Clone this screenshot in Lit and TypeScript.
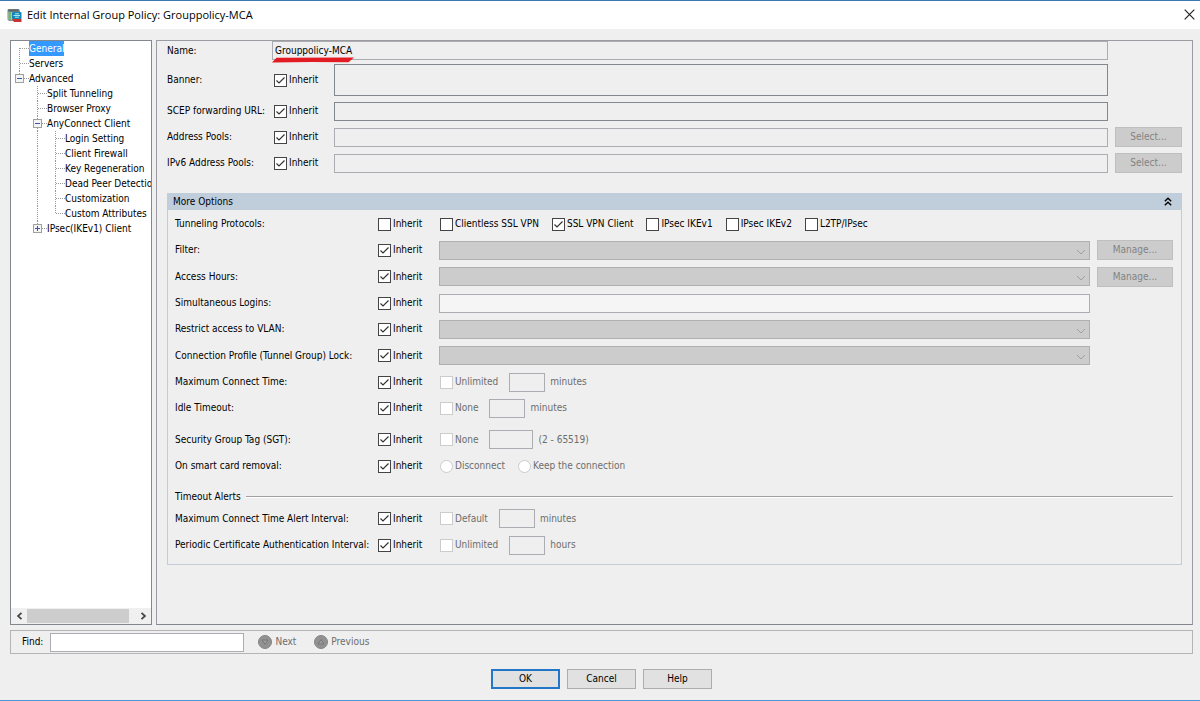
import { LitElement, html, svg, css, nothing, TemplateResult } from "lit";
import { customElement } from "lit/decorators.js";

type Guide = "blank" | "line" | "first" | "tee" | "elbow" | "minus" | "minusLast" | "plus";

interface TreeItem {
  text: string;
  guides: Guide[];
  selected?: boolean;
}

const TREE: TreeItem[] = [
  { text: "General", guides: ["first"], selected: true },
  { text: "Servers", guides: ["tee"] },
  { text: "Advanced", guides: ["minusLast"] },
  { text: "Split Tunneling", guides: ["blank", "tee"] },
  { text: "Browser Proxy", guides: ["blank", "tee"] },
  { text: "AnyConnect Client", guides: ["blank", "minus"] },
  { text: "Login Setting", guides: ["blank", "line", "tee"] },
  { text: "Client Firewall", guides: ["blank", "line", "tee"] },
  { text: "Key Regeneration", guides: ["blank", "line", "tee"] },
  { text: "Dead Peer Detection", guides: ["blank", "line", "tee"] },
  { text: "Customization", guides: ["blank", "line", "tee"] },
  { text: "Custom Attributes", guides: ["blank", "line", "elbow"] },
  { text: "IPsec(IKEv1) Client", guides: ["blank", "plus"] },
];

const controlStyles = css`
  * {
    box-sizing: border-box;
  }
  input,
  select,
  button,
  textarea {
    font: inherit;
    color: inherit;
    margin: 0;
    border-radius: 0;
    outline: none;
  }
  .tick {
    display: inline-flex;
    align-items: center;
    gap: 2px;
    white-space: nowrap;
  }
  .tick input {
    appearance: none;
    flex: none;
    width: 13px;
    height: 13px;
    border: 1px solid #444;
    background: #fff center / 11px 11px no-repeat;
  }
  .tick input[type="radio"] {
    border-radius: 50%;
  }
  .tick input:checked {
    background-image: url("data:image/svg+xml,%3Csvg xmlns='http://www.w3.org/2000/svg' viewBox='0 0 11 11'%3E%3Cpath d='M1.5 5.5L4 8L9.5 2.5' fill='none' stroke='%23333' stroke-width='1.2'/%3E%3C/svg%3E");
  }
  .tick input:disabled {
    border-color: #ccc;
  }
  .tick.off {
    color: #6d6d6d;
  }
  .text {
    width: 100%;
    height: 19px;
    padding: 0 2px;
    border: 1px solid #abadb3;
    background: #efefef;
  }
  .push {
    height: 20px;
    padding: 0;
    border: 1px solid #adadad;
    background: #e1e1e1;
  }
  .push:disabled {
    border-color: #bfbfbf;
    background: #ccc;
    color: #838383;
  }
`;

const tick = (label: string, checked = false, disabled = false, kind = "checkbox", name = "") => html`
  <label class="tick ${disabled ? "off" : ""}">
    <input type=${kind} name=${name || nothing} ?checked=${checked} ?disabled=${disabled} />${label}
  </label>
`;

@customElement("nav-tree")
class NavTree extends LitElement {
  static styles = [
    controlStyles,
    css`
      :host {
        display: flex;
        flex-direction: column;
        box-sizing: border-box;
        min-width: 0;
        border: 1px solid #828790;
        background: #fff;
        overflow: hidden;
      }
      .list {
        flex: 1;
        margin: 0;
        padding: 0;
        list-style: none;
        overflow: hidden;
      }
      .item {
        display: flex;
        height: 15px;
        line-height: 15px;
        white-space: nowrap;
      }
      .guide {
        flex: none;
        width: 18px;
        height: 15px;
      }
      .selected {
        background: #3399ff;
        color: #fff;
      }
      .scroll {
        display: flex;
        height: 16px;
        padding: 1px 0;
        background: #f0f0f0;
      }
      .arrow {
        flex: none;
        display: grid;
        place-items: center;
        width: 16px;
        padding: 0;
        border: 0;
        background: none;
      }
      .track {
        flex: 1;
        display: flex;
      }
      .thumb {
        width: 94%;
        background: #cdcdcd;
      }
    `,
  ];

  guide(kind: Guide) {
    const dash = "1 1";
    const down = (y1: number, y2: number) =>
      svg`<path d="M8.500 ${y1}V${y2}" stroke="#999" stroke-dasharray=${dash} />`;
    const across = (x: number) => svg`<path d="M${x} 7.500H18" stroke="#999" stroke-dasharray=${dash} />`;
    const box = (plus: boolean) => svg`
      <rect x="4.500" y="3.500" width="8" height="8" fill="#f4f4f4" stroke="#a0a0a0" />
      <path d="M6 7.500H11" stroke="#3a55a5" />
      ${plus ? svg`<path d="M8.500 5V10" stroke="#3a55a5" />` : nothing}`;
    const parts: Record<Guide, unknown> = {
      blank: nothing,
      line: down(0, 15),
      first: [down(7, 15), across(9)],
      tee: [down(0, 15), across(9)],
      elbow: [down(0, 8), across(9)],
      minus: [down(0, 15), across(13), box(false)],
      minusLast: [down(0, 4), across(13), box(false)],
      plus: [down(0, 4), across(13), box(true)],
    };
    return html`<svg class="guide" viewBox="0 0 18 15" fill="none" aria-hidden="true">${parts[kind]}</svg>`;
  }

  render() {
    return html`
      <ul class="list" role="tree">
        ${TREE.map(
          (item) => html`
            <li class="item" role="treeitem" aria-selected=${item.selected ? "true" : "false"}>
              ${item.guides.map((g) => this.guide(g))}<span class=${item.selected ? "selected" : ""}>${item.text}</span>
            </li>
          `,
        )}
      </ul>
      <div class="scroll">
        <button class="arrow" aria-label="Scroll left">
          <svg width="7" height="8" viewBox="0 0 7 8" fill="none"><path d="M5.500 .8L2 4L5.500 7.200" stroke="#444" stroke-width="1.700" /></svg>
        </button>
        <div class="track"><div class="thumb"></div></div>
        <button class="arrow" aria-label="Scroll right">
          <svg width="7" height="8" viewBox="0 0 7 8" fill="none"><path d="M1.500 .8L5 4L1.500 7.200" stroke="#444" stroke-width="1.700" /></svg>
        </button>
      </div>
    `;
  }
}

@customElement("policy-form")
class PolicyForm extends LitElement {
  static styles = [
    controlStyles,
    css`
      :host {
        display: block;
        box-sizing: border-box;
        min-width: 0;
        padding: 0 10px;
        border: 1px solid #9a9ca2;
        border-bottom-color: #828790;
      }
      .top {
        display: grid;
        grid-template-columns: 100px 53px minmax(0, 1fr) 67px;
        column-gap: 7px;
        row-gap: 4px;
        align-items: center;
      }
      .named {
        grid-column: 2 / 4;
        position: relative;
        margin-left: -2px;
        display: flex;
      }
      .mark {
        position: absolute;
        left: 0;
        top: 16px;
      }
      .field {
        grid-column: 3;
        display: flex;
        align-items: center;
        min-height: 22px;
      }
      .firm {
        border-color: #828790;
      }
      .banner {
        display: block;
        width: 100%;
        height: 32px;
        resize: none;
      }
      .name {
        white-space: nowrap;
      }
      .more {
        margin-top: 19px;
        border: 1px solid #c3cdd8;
        border-top: 0;
      }
      .head {
        display: flex;
        align-items: center;
        justify-content: space-between;
        height: 17px;
        padding: 0 9px 0 5px;
        background: #c0cddb;
      }
      .title {
        margin: 0;
        font: inherit;
      }
      .fold {
        display: flex;
        padding: 0;
        border: 0;
        background: none;
      }
      .rows {
        padding: 1px 8px 6px 7px;
      }
      .row {
        display: grid;
        grid-template-columns: 196px 54px minmax(0, 1fr) 76px;
        column-gap: 7px;
        align-items: center;
        height: 26px;
      }
      .row:nth-child(3n) {
        height: 27px;
      }
      .spaced {
        margin-top: 5px;
      }
      .group {
        display: flex;
        align-items: center;
      }
      .choices {
        grid-column: 3 / 5;
        padding-left: 1px;
        gap: 13px;
      }
      .limit {
        padding-left: 1px;
        gap: 11px;
        color: #6d6d6d;
      }
      .unit {
        display: flex;
        align-items: center;
        gap: 5px;
        white-space: nowrap;
      }
      .small {
        width: 36px;
      }
      .tag {
        width: 44px;
      }
      .light {
        background: #f5f5f5;
      }
      .drop {
        display: grid;
        align-items: center;
      }
      .drop > * {
        grid-area: 1 / 1;
      }
      .pick {
        appearance: none;
        width: 100%;
        height: 19px;
        padding: 0 2px;
        border: 1px solid #b0b0b0;
        background: #ccc;
        opacity: 1;
      }
      .caret {
        justify-self: end;
        margin-right: 4px;
        margin-top: 3px;
        pointer-events: none;
      }
      .divider {
        display: flex;
        align-items: center;
        gap: 5px;
        height: 17px;
        margin-top: 9px;
      }
      .rule {
        flex: 1;
        height: 2px;
        margin: 0;
        border: 0;
        border-top: 1px solid #a0a0a0;
        background: #fff;
      }
    `,
  ];

  top(label: string, field: TemplateResult, button = false) {
    return html`
      <span class="name">${label}:</span>
      ${tick("Inherit", true)}
      <div class="field">${field}</div>
      ${button ? html`<button class="push" disabled>Select...</button>` : html`<span></span>`}
    `;
  }

  row(label: string, content: TemplateResult, options: { checked?: boolean; spaced?: boolean; manage?: boolean } = {}) {
    const { checked = true, spaced = false, manage = false } = options;
    return html`
      <div class="row ${spaced ? "spaced" : ""}">
        <span class="name">${label}:</span>
        ${tick("Inherit", checked)} ${content}
        ${manage ? html`<button class="push" disabled>Manage...</button>` : nothing}
      </div>
    `;
  }

  drop(label: string) {
    return html`
      <div class="drop">
        <select class="pick" disabled aria-label=${label}></select>
        <svg class="caret" width="10" height="6" viewBox="0 0 10 6" fill="none">
          <path d="M1 1L5 5L9 1" stroke="#a0a0a0" />
        </svg>
      </div>
    `;
  }

  limit(label: string, option: string, unit: string, wide = false) {
    return html`
      <div class="group limit">
        ${tick(option, false, true)}
        <span class="unit"><input class="text ${wide ? "tag" : "small"}" disabled aria-label=${label} />${unit}</span>
      </div>
    `;
  }

  render() {
    return html`
      <div class="top">
        <label class="name" for="policy">Name:</label>
        <div class="named">
          <input class="text" id="policy" value="Grouppolicy-MCA" readonly />
          <svg class="mark" width="82" height="6" viewBox="0 0 82 6" aria-hidden="true">
            <path d="M0 5.600L4.500 .8L82 .4L76.500 5.200L40 5Z" fill="#e31b23" />
          </svg>
        </div>
        <span></span>
        ${this.top("Banner", html`<textarea class="text firm banner" disabled aria-label="Banner"></textarea>`)}
        ${this.top("SCEP forwarding URL", html`<input class="text firm" disabled aria-label="SCEP forwarding URL" />`)}
        ${this.top("Address Pools", html`<input class="text" disabled aria-label="Address Pools" />`, true)}
        ${this.top("IPv6 Address Pools", html`<input class="text" disabled aria-label="IPv6 Address Pools" />`, true)}
      </div>
      <section class="more">
        <header class="head">
          <h2 class="title">More Options</h2>
          <button class="fold" aria-label="Collapse">
            <svg width="8" height="9" viewBox="0 0 8 9" fill="none">
              <path d="M.8 4.300L4 1.200L7.200 4.300M.8 8.300L4 5.200L7.200 8.300" stroke="#000" stroke-width="1.400" />
            </svg>
          </button>
        </header>
        <div class="rows">
          ${this.row(
            "Tunneling Protocols",
            html`<div class="group choices">
              ${tick("Clientless SSL VPN")} ${tick("SSL VPN Client", true)} ${tick("IPsec IKEv1")}
              ${tick("IPsec IKEv2")} ${tick("L2TP/IPsec")}
            </div>`,
            { checked: false },
          )}
          ${this.row("Filter", this.drop("Filter"), { manage: true })}
          ${this.row("Access Hours", this.drop("Access Hours"), { manage: true })}
          ${this.row(
            "Simultaneous Logins",
            html`<input class="text light" disabled aria-label="Simultaneous Logins" />`,
          )}
          ${this.row("Restrict access to VLAN", this.drop("Restrict access to VLAN"))}
          ${this.row("Connection Profile (Tunnel Group) Lock", this.drop("Connection Profile Lock"))}
          ${this.row("Maximum Connect Time", this.limit("Maximum Connect Time", "Unlimited", "minutes"))}
          ${this.row("Idle Timeout", this.limit("Idle Timeout", "None", "minutes"))}
          ${this.row("Security Group Tag (SGT)", this.limit("Security Group Tag", "None", "(2 - 65519)", true), {
            spaced: true,
          })}
          ${this.row(
            "On smart card removal",
            html`<div class="group choices">
              ${tick("Disconnect", false, true, "radio", "card")}
              ${tick("Keep the connection", false, true, "radio", "card")}
            </div>`,
          )}
          <div class="divider">Timeout Alerts<hr class="rule" /></div>
          ${this.row("Maximum Connect Time Alert Interval", this.limit("Connect Time Alert", "Default", "minutes"))}
          ${this.row("Periodic Certificate Authentication Interval", this.limit("Certificate Interval", "Unlimited", "hours"))}
        </div>
      </section>
    `;
  }
}

@customElement("app-root")
class AppRoot extends LitElement {
  static styles = [
    controlStyles,
    css`
      :host {
        display: flex;
        flex-direction: column;
        box-sizing: border-box;
        min-height: 100vh;
        border-top: 1px solid #3a78b0;
        border-bottom: 1px solid #4a9ad8;
        background: #efefef;
        color: #000;
        font: 10px/14px "DejaVu Sans Condensed", "DejaVu Sans", sans-serif;
      }
      .titlebar {
        display: flex;
        align-items: center;
        gap: 5px;
        height: 28px;
        padding: 0 5px 0 7px;
        background: #fff;
      }
      .caption {
        flex: 1;
        margin: 0;
        font: 11px/16px "Open Sans", "Noto Sans", sans-serif;
      }
      .close {
        display: flex;
        padding: 0 0 2px;
        border: 0;
        background: none;
      }
      .body {
        flex: 1;
        display: grid;
        grid-template-columns: 142px minmax(0, 1fr);
        gap: 4px;
        padding: 11px 7px 5px 10px;
      }
      .find {
        display: flex;
        align-items: center;
        height: 24px;
        margin: 0 7px 0 10px;
        padding: 0 11px;
        gap: 14px;
        border: 1px solid #b4b4b4;
      }
      .search {
        display: flex;
        align-items: center;
        gap: 7px;
      }
      .query {
        width: 194px;
        background: #fff;
      }
      .steps {
        display: flex;
        gap: 18px;
      }
      .step {
        display: flex;
        align-items: center;
        gap: 3px;
        padding: 0;
        border: 0;
        background: none;
        color: #6d6d6d;
      }
      .actions {
        display: flex;
        justify-content: center;
        gap: 7px;
        padding: 15px 0 11px 3px;
      }
      .action {
        width: 69px;
      }
      .primary {
        border: 2px solid #2277c9;
      }
    `,
  ];

  step(label: string, triangle: string) {
    return html`
      <button class="step" disabled>
        <svg width="14" height="14" viewBox="0 0 14 14" fill="none">
          <circle cx="7" cy="7" r="6.500" fill="#929292" stroke="#858585" />
          <path d=${triangle} stroke="#777" fill="#9c9c9c" />
        </svg>
        ${label}
      </button>
    `;
  }

  render() {
    return html`
      <header class="titlebar">
        <svg width="15" height="15" viewBox="0 0 15 15" aria-hidden="true">
          <path d="M1 1H12L13 3V12L11 13H2L.5 11.500V2Z" fill="#7d9090" />
          <path d="M1.500 1.500H11.500V3.500H1.500Z" fill="#566668" />
          <path d="M1.500 4H5.500V12H1.500Z" fill="#9fd39a" />
          <path d="M2 5H4M2 7H4M2 9H4M2 11H4" stroke="#4d9a52" />
          <rect x="5" y="4" width="9.500" height="7" rx="1" fill="#1487b8" />
          <path d="M6.500 7.500H13M8 5.800H12M8 9.200H12" stroke="#a5e8f5" />
          <path d="M5 11H14.500V14H7Z" fill="#c93432" />
        </svg>
        <h1 class="caption">Edit Internal Group Policy: Grouppolicy-MCA</h1>
        <button class="close" aria-label="Close">
          <svg width="11" height="11" viewBox="0 0 11 11" fill="none">
            <path d="M.7 .7L10.300 10.300M10.300 .7L.7 10.300" stroke="#222" stroke-width="1.200" />
          </svg>
        </button>
      </header>
      <main class="body">
        <nav-tree></nav-tree>
        <policy-form></policy-form>
      </main>
      <div class="find">
        <label class="search">Find: <input class="text query" type="text" /></label>
        <div class="steps">${this.step("Next", "M4 5H10L7 9.500Z")} ${this.step("Previous", "M4 9H10L7 4.500Z")}</div>
      </div>
      <footer class="actions">
        <button class="push action primary">OK</button>
        <button class="push action">Cancel</button>
        <button class="push action">Help</button>
      </footer>
    `;
  }
}
